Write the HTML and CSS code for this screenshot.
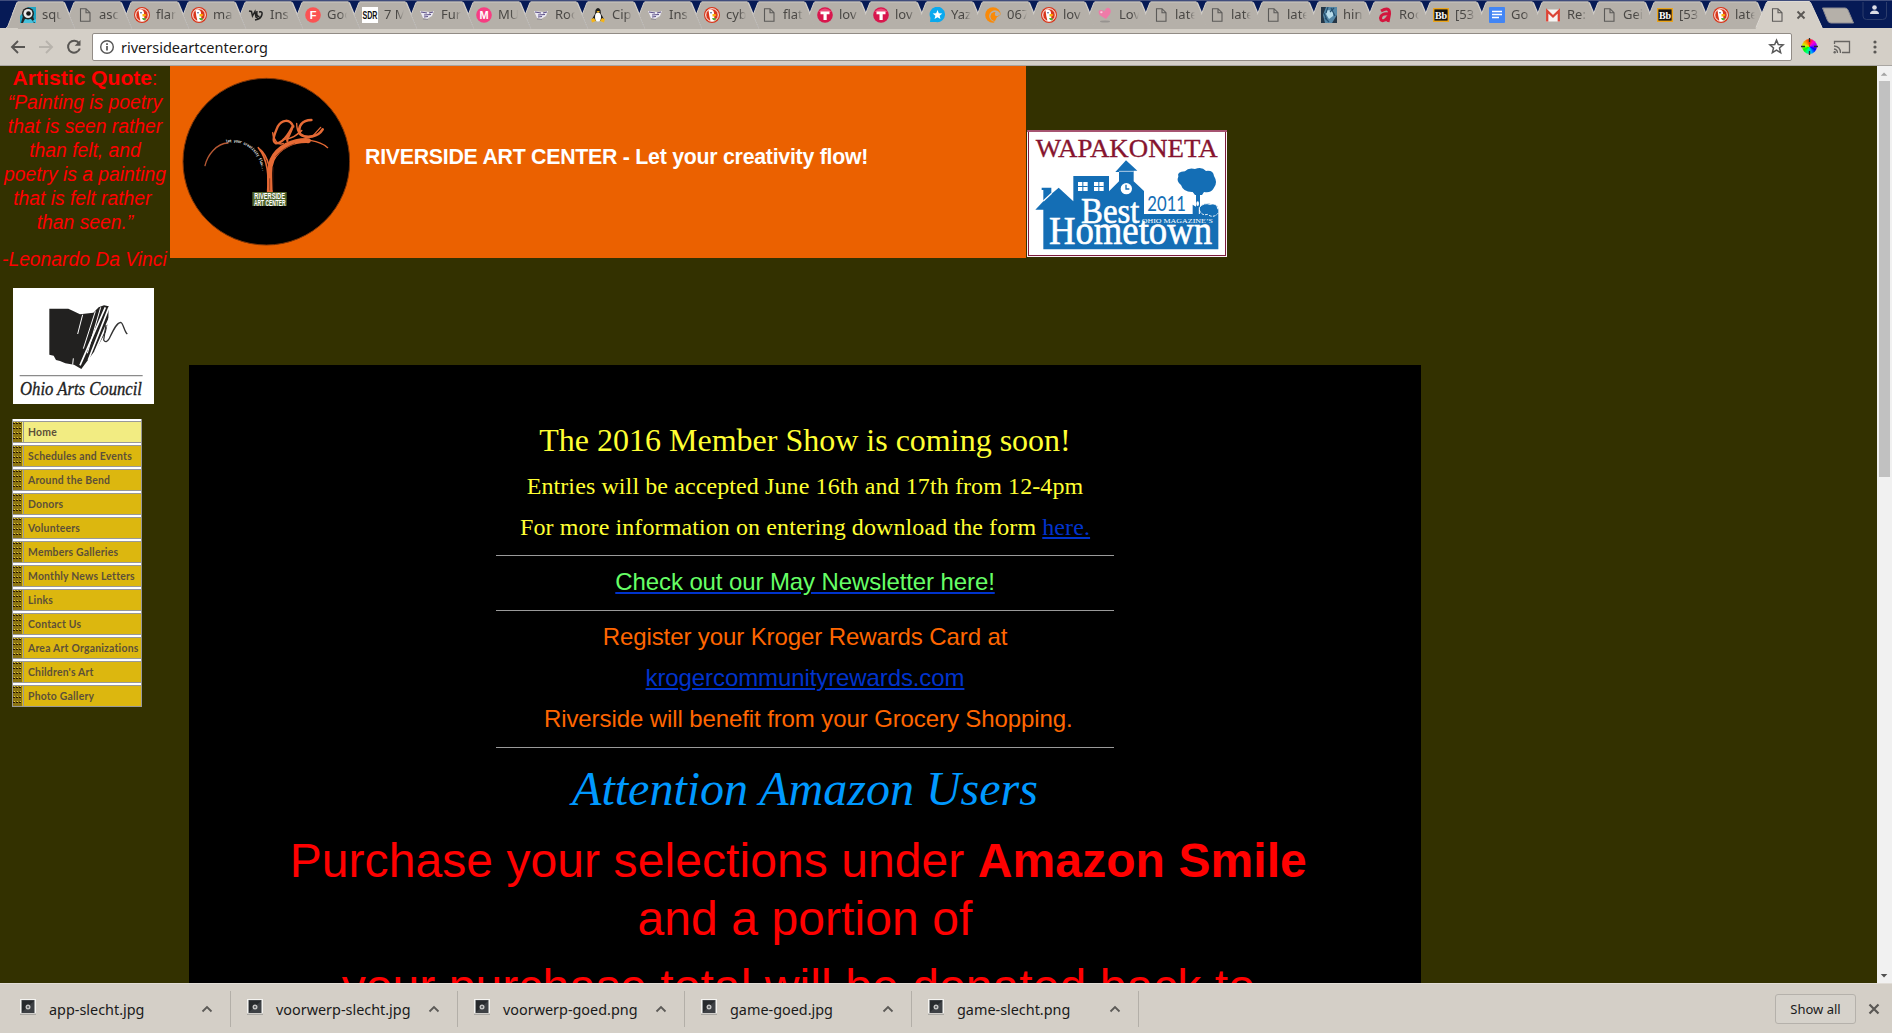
FILE: index.html
```html
<!DOCTYPE html>
<html lang="en">
<head>
<meta charset="utf-8">
<title>riversideartcenter.org</title>
<link rel="stylesheet" href="styles.css">
</head>
<body>
<svg class="defs" width="0" height="0">
  <defs>
    <symbol id="shape" viewBox="0 0 76 29"><path d="M12.3 14.5L17 2.5 18 1.5H63L64.3 2.5 75 29H18.2Z" fill="#b5b0a9"/><path d="M12.3 14.5L17 2.5" stroke="#d2cec8" fill="none"/><path d="M17.500 2H63.500" stroke="#cbc7c1" fill="none"/><path d="M64.300 2.500L75 28" stroke="#d6d2cc" stroke-width="1.200" fill="none"/></symbol>
    <symbol id="page" viewBox="0 0 16 16"><path d="M3.500 1.700H9L13 5.700V14.300H3.500ZM9 1.700V5.700H13" fill="none" stroke="#5b5a58" stroke-width="1.100"/></symbol>
    <symbol id="duck" viewBox="0 0 16 16"><circle cx="8" cy="8" r="8" fill="#d9371c"/><circle cx="8" cy="8" r="6.300" fill="#d9371c" stroke="#fff" stroke-width="1"/><path d="M4.500 3C7 1.500 10 3 10 6L10.500 14H6.500Q5 9 4.500 3Z" fill="#fff"/><path d="M8.500 7Q12 6.500 12.500 8 11 10 8.500 9.500Z" fill="#fbb50b"/><path d="M8 11L11.500 11V13.500L9 13Z" fill="#4fb03c"/><circle cx="7" cy="5.800" r=".8" fill="#2b4a80"/></symbol>
    <symbol id="squid" viewBox="0 0 16 16"><path d="M8 0H16V16H0V9Z" fill="#1fa5c4"/><path d="M1 16L3 9 13 9 15 16Z" fill="#262626"/><path d="M3 16L5 12 11 12 14 16Z" fill="#48c1dc"/><circle cx="8" cy="6.500" r="6" fill="#222"/><circle cx="8" cy="6.500" r="4.500" fill="#e8e8e8"/><circle cx="8.500" cy="6.500" r="2.300" fill="#151515"/><path d="M12 14L16 12V16Z" fill="#3fc4e4"/></symbol>
    <symbol id="mu" viewBox="0 0 16 16"><path d="M1 4L3.500 4.500 4.500 9 7 4.500 8 10 10.500 12M9 4Q8 10 11.500 9.500M11 5Q15 4 13.800 8 13 12 7 13" fill="none" stroke="#222" stroke-width="1.500"/></symbol>
    <symbol id="eff" viewBox="0 0 16 16"><circle cx="8" cy="8" r="7.800" fill="#fb5353"/><text x="8" y="12" class="glyph">F</text></symbol>
    <symbol id="sdr" viewBox="0 0 16 16"><rect width="16" height="16" fill="#fff"/><text x="8" y="12" class="glyph dark" textLength="15" lengthAdjust="spacingAndGlyphs">SDR</text></symbol>
    <symbol id="furry" viewBox="0 0 16 16"><path d="M1 4L11 5 15 4 13 9 8 12 4 11Z" fill="#eceaf3"/><path d="M2 5L8 6M10 6L14 5M5 8L12 7.500M5 10L9 9.500" stroke="#5d5088" stroke-width="1.200"/><path d="M4 12L9 12.500" stroke="#8f8b94"/></symbol>
    <symbol id="em" viewBox="0 0 16 16"><circle cx="8" cy="8" r="7.800" fill="#f73d82"/><text x="8" y="12.300" class="glyph">M</text></symbol>
    <symbol id="tux" viewBox="0 0 16 16"><path d="M5.500 3Q8-1 10.500 3L11 7 14 12 11 14H5L2 12 5 7Z" fill="#1d1d1d"/><ellipse cx="8" cy="10" rx="3" ry="4.500" fill="#fff"/><path d="M6.500 4H10L8 6ZM1 12L4 11 6 14 2 15.500ZM15 12L12 11 10 14 14 15.500Z" fill="#f4b51b"/></symbol>
    <symbol id="tee" viewBox="0 0 16 16"><circle cx="8" cy="8" r="7.800" fill="#d8164d"/><path d="M1 5Q8-2 15 5Z" fill="#ec4a78"/><path d="M3.500 4.500H12.500V7.200H9.700V13H6.500V7.200H3.500Z" fill="#fff"/></symbol>
    <symbol id="yahoo" viewBox="0 0 16 16"><path d="M1 15L1.500 11A7.700 7.700 0 1 1 7 15Z" fill="#0aa9ee"/><path d="M8.500 3L9.800 6.300 13.300 6.500 10.600 8.700 11.500 12 8.500 10.200 5.500 12 6.400 8.700 3.700 6.500 7.200 6.300Z" fill="#fff"/></symbol>
    <symbol id="crunchy" viewBox="0 0 16 16"><circle cx="8" cy="8" r="7.800" fill="#fa8a08"/><circle cx="10" cy="9" r="5.800" fill="#b5b0a9"/><circle cx="10" cy="9.500" r="4.600" fill="#fa8a08"/><circle cx="12" cy="7" r="2.200" fill="#b5b0a9"/><path d="M12 10L16 8V16H9Z" fill="#b5b0a9"/></symbol>
    <symbol id="heart" viewBox="0 0 16 16"><ellipse cx="8" cy="14.500" rx="5" ry="1" fill="#979390"/><path d="M9 12L2.500 8Q0 3 4 3 6 3 7.500 4.500 9 0 12 1 15 3 13 7Z" fill="#ef7ba8"/><path d="M3 5Q4 3.500 6 5L4 6.500Z" fill="#fbd1e0"/></symbol>
    <symbol id="anime" viewBox="0 0 16 16"><rect width="16" height="16" fill="#5587a6"/><path d="M0 0H5L2 8 4 16H0ZM11 16L16 8V16Z" fill="#243647"/><path d="M6 3L12 4 12 9 8 12 5 7Z" fill="#b8dcea"/><path d="M7 0L5 6M10 1L14 9M13 1L9 5M4 11L8 15M3 6L6 13" stroke="#25506f" stroke-width="1.200"/></symbol>
    <symbol id="angie" viewBox="0 0 16 16"><path d="M4 4Q13-1 12.500 7L11 15M12 7Q4 6 3.500 11 4 15 8 13 11 11 12 7" fill="none" stroke="#d3163e" stroke-width="3"/></symbol>
    <symbol id="bb" viewBox="0 0 16 16"><rect x=".7" y="1.700" width="14.600" height="12.600" fill="#111" stroke="#eba51c" stroke-width="1.400"/><text x="8" y="12" class="glyph serif">Bb</text></symbol>
    <symbol id="docs" viewBox="0 0 16 16"><rect width="16" height="16" rx="1" fill="#4285f4"/><path d="M3 4.500H13M3 7.500H13M3 10.500H10" stroke="#fff" stroke-width="1.300"/></symbol>
    <symbol id="gmail" viewBox="0 0 16 16"><rect x="1" y="2.500" width="14" height="12" fill="#f6f3f2"/><path d="M2.200 14.500V4L8 9.500 13.800 4V14.500" fill="none" stroke="#dc4436" stroke-width="2.300"/></symbol>
    <symbol id="thumb" viewBox="0 0 16 16"><rect width="16" height="16" fill="#f5f4f1"/><path d="M0 14.500H16V16H0Z" fill="#aaa8a3"/><rect x="1.500" y="1" width="13" height="13" fill="#3d4044"/><path d="M2 2H14L2 13Z" fill="#272a2d"/><circle cx="8" cy="8" r="2.500" fill="#c3c3c3"/><circle cx="8" cy="8" r=".9" fill="#3d4044"/></symbol>
    <pattern id="dots" width="3" height="5" patternUnits="userSpaceOnUse"><rect width="3" height="5" fill="#8c7512"/><path d="M0 1.500H2" stroke="#2a1800"/><path d="M1 .5H2" stroke="#e8cf3d"/></pattern>
  </defs>
</svg>

<header class="chrome">
  <div class="tabstrip">
    <div class="tab first"><svg class="lead" width="20" height="28"><path d="M6 28L7.500 27 17 2.500 20 2V28Z" fill="#b5b0a9"/><path d="M6 28L7.500 27 17.200 2.500" fill="none" stroke="#d2cec8"/></svg><svg class="shape"><use href="#shape"/></svg><svg class="fav"><use href="#squid"/></svg><span>squ</span></div>
    <div class="tab"><svg class="shape"><use href="#shape"/></svg><svg class="fav"><use href="#page"/></svg><span>asc</span></div>
    <div class="tab"><svg class="shape"><use href="#shape"/></svg><svg class="fav"><use href="#duck"/></svg><span>flan</span></div>
    <div class="tab"><svg class="shape"><use href="#shape"/></svg><svg class="fav"><use href="#duck"/></svg><span>ma</span></div>
    <div class="tab"><svg class="shape"><use href="#shape"/></svg><svg class="fav"><use href="#mu"/></svg><span>Ins</span></div>
    <div class="tab"><svg class="shape"><use href="#shape"/></svg><svg class="fav"><use href="#eff"/></svg><span>Goo</span></div>
    <div class="tab"><svg class="shape"><use href="#shape"/></svg><svg class="fav"><use href="#sdr"/></svg><span>7 M</span></div>
    <div class="tab"><svg class="shape"><use href="#shape"/></svg><svg class="fav"><use href="#furry"/></svg><span>Fur</span></div>
    <div class="tab"><svg class="shape"><use href="#shape"/></svg><svg class="fav"><use href="#em"/></svg><span>MU</span></div>
    <div class="tab"><svg class="shape"><use href="#shape"/></svg><svg class="fav"><use href="#furry"/></svg><span>Roo</span></div>
    <div class="tab"><svg class="shape"><use href="#shape"/></svg><svg class="fav"><use href="#tux"/></svg><span>Cip</span></div>
    <div class="tab"><svg class="shape"><use href="#shape"/></svg><svg class="fav"><use href="#furry"/></svg><span>Ins</span></div>
    <div class="tab"><svg class="shape"><use href="#shape"/></svg><svg class="fav"><use href="#duck"/></svg><span>cyb</span></div>
    <div class="tab slim"><svg class="shape"><use href="#shape"/></svg><svg class="fav"><use href="#page"/></svg><span>flat</span></div>
    <div class="tab slim"><svg class="shape"><use href="#shape"/></svg><svg class="fav"><use href="#tee"/></svg><span>lov</span></div>
    <div class="tab slim"><svg class="shape"><use href="#shape"/></svg><svg class="fav"><use href="#tee"/></svg><span>lov</span></div>
    <div class="tab slim"><svg class="shape"><use href="#shape"/></svg><svg class="fav"><use href="#yahoo"/></svg><span>Yaz</span></div>
    <div class="tab slim"><svg class="shape"><use href="#shape"/></svg><svg class="fav"><use href="#crunchy"/></svg><span>067</span></div>
    <div class="tab slim"><svg class="shape"><use href="#shape"/></svg><svg class="fav"><use href="#duck"/></svg><span>lov</span></div>
    <div class="tab slim"><svg class="shape"><use href="#shape"/></svg><svg class="fav"><use href="#heart"/></svg><span>Lov</span></div>
    <div class="tab slim"><svg class="shape"><use href="#shape"/></svg><svg class="fav"><use href="#page"/></svg><span>late</span></div>
    <div class="tab slim"><svg class="shape"><use href="#shape"/></svg><svg class="fav"><use href="#page"/></svg><span>late</span></div>
    <div class="tab slim"><svg class="shape"><use href="#shape"/></svg><svg class="fav"><use href="#page"/></svg><span>late</span></div>
    <div class="tab slim"><svg class="shape"><use href="#shape"/></svg><svg class="fav"><use href="#anime"/></svg><span>hin</span></div>
    <div class="tab slim"><svg class="shape"><use href="#shape"/></svg><svg class="fav"><use href="#angie"/></svg><span>Roo</span></div>
    <div class="tab slim"><svg class="shape"><use href="#shape"/></svg><svg class="fav"><use href="#bb"/></svg><span>[53</span></div>
    <div class="tab slim"><svg class="shape"><use href="#shape"/></svg><svg class="fav"><use href="#docs"/></svg><span>Go</span></div>
    <div class="tab slim"><svg class="shape"><use href="#shape"/></svg><svg class="fav"><use href="#gmail"/></svg><span>Re:</span></div>
    <div class="tab slim"><svg class="shape"><use href="#shape"/></svg><svg class="fav"><use href="#page"/></svg><span>Gei</span></div>
    <div class="tab slim"><svg class="shape"><use href="#shape"/></svg><svg class="fav"><use href="#bb"/></svg><span>[53</span></div>
    <div class="tab slim"><svg class="shape"><use href="#shape"/></svg><svg class="fav"><use href="#duck"/></svg><span>late</span></div>
    <div class="tab active"><svg class="shape"><path d="M6.500 29L7.500 27 17.500 2.500 18.500 1.500H60.500L61.500 2.500 73 27 74.500 29Z" fill="#d4cfc7"/><path d="M7 27.500L17.500 2.500 18.500 1.500H60.500L61.500 2.500 73 27.500" fill="none" stroke="#dedad4"/></svg><svg class="fav"><use href="#page"/></svg><svg class="close" viewBox="0 0 10 10"><path d="M1.500 1.500L8.500 8.500M8.500 1.500L1.500 8.500" stroke="#5a5754" stroke-width="1.900"/></svg></div>
    <svg class="newtab" width="34" height="18"><path d="M1.500 1H24Q26 1 27 3L32.500 16H10Q7.500 16 6.500 13.500Z" fill="#b5b0a9" stroke="#8c8b93"/></svg>
    <svg class="profile" width="26" height="20"><path d="M1 1V15Q1 18.500 4.500 18.500H20.500Q24.500 18.500 24.500 15V1" fill="none" stroke="#2c3c6b"/><circle cx="12.500" cy="6.500" r="2.300" fill="#dcdce4"/><path d="M8 13Q8 9.500 12.500 9.500T17 13Z" fill="#dcdce4"/></svg>
  </div>
  <div class="toolbar">
    <svg class="tool" viewBox="0 0 16 16"><path d="M15 8H2.500M8 2L2 8 8 14" fill="none" stroke="#585653" stroke-width="1.900"/></svg>
    <svg class="tool" viewBox="0 0 16 16"><path d="M1 8H13.500M8 2L14 8 8 14" fill="none" stroke="#b7b3ac" stroke-width="1.900"/></svg>
    <svg class="tool" viewBox="0 0 16 16"><path d="M13 4.200A6 6 0 1 0 13.800 9.500" fill="none" stroke="#585653" stroke-width="2"/><path d="M14.500 1V6.800H8.700Z" fill="#585653"/></svg>
    <div class="address">
      <svg class="info" viewBox="0 0 16 16"><circle cx="8" cy="8" r="6.300" fill="none" stroke="#555" stroke-width="1.400"/><path d="M8 7V11.500M8 4.300V6" stroke="#555" stroke-width="1.700"/></svg>
      <span>riversideartcenter.org</span>
      <svg class="star" viewBox="0 0 16 16"><path d="M8 2L9.700 6.200 14.200 6.500 10.800 9.400 11.900 13.800 8 11.400 4.100 13.800 5.200 9.400 1.800 6.500 6.300 6.200Z" fill="none" stroke="#585858" stroke-width="1.400"/></svg>
    </div>
    <div class="wheel"><svg viewBox="0 0 17 17"><path d="M8.500 0V4M8.500 13V17M0 8.500H4M13 8.500H17" stroke="#2b2b2b" stroke-width="1.300"/></svg></div>
    <svg class="cast" viewBox="0 0 18 14"><path d="M1.500 4V1.500H16.500V12.500H9" fill="none" stroke="#676562" stroke-width="1.300"/><path d="M1 6Q7.500 6.500 7.500 13M1 9Q4.500 9.500 4.500 13" fill="none" stroke="#676562" stroke-width="1.300"/><circle cx="1.700" cy="12.300" r="1.200" fill="#676562"/></svg>
    <svg class="dots" viewBox="0 0 4 14"><circle cx="2" cy="2" r="1.600"/><circle cx="2" cy="7" r="1.600"/><circle cx="2" cy="12" r="1.600"/></svg>
  </div>
</header>

<div class="viewport">
  <div class="site">
    <aside class="sidebar">
      <p class="quote"><b>Artistic Quote</b>:<br><i>“Painting is poetry<br>that is seen rather<br>than felt, and<br>poetry is a painting<br>that is felt rather&nbsp;<br>than seen.”</i></p>
      <p class="author">-Leonardo Da Vinci</p>
      <svg class="council" viewBox="39 54 423 348">
        <rect x="39" y="54" width="423" height="348" fill="#fff"/>
        <path d="M148 116H205L218 122 240 133 280 128 296 112 312 106 326 109 325 150 318 185 290 235 244 297 222 284 196 280 180 273 168 270 161 257 148 254Z" fill="#222120"/>
        <path d="M248 134L233 192M286 124L250 236M302 112L262 250" stroke="#fff" stroke-width="3" fill="none"/>
        <path d="M316 112L240 286M327 112L265 270M328 145L285 245" stroke="#fff" stroke-width="5" fill="none"/>
        <path d="M220 265L218 284" stroke="#fff" stroke-width="3"/>
        <path d="M318 165L311 210Q318 222 328 205C340 180 350 158 362 157C370 158 372 184 382 192" fill="none" stroke="#333" stroke-width="4"/>
        <path d="M59 317H428" stroke="#8b8b8b" stroke-width="4"/>
        <text x="60" y="374" textLength="366" lengthAdjust="spacingAndGlyphs">Ohio Arts Council</text>
      </svg>
      <nav class="menu">
        <a class="current"><svg><rect width="9" height="20" fill="url(#dots)"/></svg>Home</a>
        <a><svg><rect width="9" height="20" fill="url(#dots)"/></svg>Schedules and Events</a>
        <a><svg><rect width="9" height="20" fill="url(#dots)"/></svg>Around the Bend</a>
        <a><svg><rect width="9" height="20" fill="url(#dots)"/></svg>Donors</a>
        <a><svg><rect width="9" height="20" fill="url(#dots)"/></svg>Volunteers</a>
        <a><svg><rect width="9" height="20" fill="url(#dots)"/></svg>Members Galleries</a>
        <a><svg><rect width="9" height="20" fill="url(#dots)"/></svg>Monthly News Letters</a>
        <a><svg><rect width="9" height="20" fill="url(#dots)"/></svg>Links</a>
        <a><svg><rect width="9" height="20" fill="url(#dots)"/></svg>Contact Us</a>
        <a><svg><rect width="9" height="20" fill="url(#dots)"/></svg>Area Art Organizations</a>
        <a><svg><rect width="9" height="20" fill="url(#dots)"/></svg>Children's Art</a>
        <a><svg><rect width="9" height="20" fill="url(#dots)"/></svg>Photo Gallery</a>
      </nav>
    </aside>
    <main>
      <div class="masthead">
        <div class="banner">
          <svg class="logo" viewBox="510 18 540 576">
            <circle cx="799" cy="305" r="250" fill="#000" stroke="#7d3508" stroke-width="3"/>
            <g fill="none" stroke="#e66a35" stroke-linecap="round">
              <path d="M615 317C622 285 650 250 684 249" stroke="#b75934" stroke-width="4"/>
              <path d="M811 395C808 350 806 325 816 300C835 260 880 240 925 242" stroke-width="15"/>
              <path d="M880 246C915 236 955 240 983 263" stroke-width="4"/>
              <path d="M803 395C806 350 805 300 775 263M808 320C800 290 790 275 780 268" stroke-width="5"/>
              <path d="M880 200C870 175 845 178 833 200C822 225 815 245 828 250C850 250 870 215 880 195C872 220 858 240 862 243" stroke-width="7"/>
              <path d="M818 218C820 240 835 258 850 250" stroke-width="4"/>
              <path d="M850 238C875 238 890 225 905 212" stroke-width="5"/>
              <path d="M934 180C905 180 893 200 900 222C920 238 955 230 968 208" stroke-width="8"/>
              <path d="M890 190C890 215 900 232 925 232M940 226L962 202" stroke-width="4"/>
            </g>
            <path d="M809 392V355M818 390L819 320M826 290Q850 262 885 251" stroke="#6d2b14" stroke-width="2" fill="none"/>
            <path id="arc" d="M678 248C735 238 785 275 789 350" fill="none"/>
            <text class="motto"><textPath href="#arc" textLength="158" lengthAdjust="spacingAndGlyphs">let your creativity flow...</textPath></text>
            <rect x="757" y="396" width="103" height="42" fill="#50652c"/>
            <text class="plate" x="763" y="416" textLength="92" lengthAdjust="spacingAndGlyphs">RIVERSIDE</text>
            <text class="plate" x="762" y="437" textLength="95" lengthAdjust="spacingAndGlyphs">ART CENTER</text>
          </svg>
          <h1>RIVERSIDE ART CENTER - Let your creativity flow!</h1>
        </div>
        <svg class="badge" viewBox="81 60 600 381">
          <rect x="81" y="60" width="600" height="381" fill="#fbf0f5"/>
          <rect x="85.500" y="64.500" width="591" height="372" fill="#fff" stroke="#7d1c3c" stroke-width="3"/>
          <path d="M81 63H681" stroke="#a65471" stroke-width="6"/>
          <text class="wap" x="107" y="140" textLength="546" lengthAdjust="spacingAndGlyphs">WAPAKONETA</text>
          <g fill="#146eb5">
            <path d="M130 418V299H106L130 274V240H125V233H154V252L176 233 220 274V198H327V244L357 214V186H346L378 151 412 182H401V214L432 243V312H578V284L588 290V255H600V290L606 284Q620 276 632 282 655 280 655 298V418Z"/>
            <path d="M543 225Q528 213 535 200 530 185 555 184 565 172 585 177 605 168 618 183 640 180 642 198 655 218 641 235 633 250 612 246L606 255H585L578 246Q550 247 543 225Z"/>
          </g>
          <path d="M130 273L155 250" stroke="#fff" stroke-width="4"/>
          <path d="M357 184H401" stroke="#fff" stroke-width="2"/>
          <path d="M598 312V292Q612 276 630 283 650 276 654 298" fill="none" stroke="#fff" stroke-width="3"/>
          <path d="M598 300Q605 318 622 313 640 326 654 310" fill="none" stroke="#fff" stroke-width="3" stroke-dasharray="8 4"/>
          <ellipse cx="593" cy="281" rx="4" ry="7" fill="#fff"/>
          <path d="M234 216H263V243H234ZM282 216H311V243H282Z" fill="#fff"/>
          <path d="M248.500 216V243M234 229.500H263M296.500 216V243M282 229.500H311" stroke="#146eb5" stroke-width="3"/>
          <circle cx="379" cy="236" r="17" fill="#fff"/><path d="M378 224V237H388" fill="none" stroke="#146eb5" stroke-width="4"/>
          <text class="year" x="442" y="304" textLength="116" lengthAdjust="spacingAndGlyphs">2011</text>
          <text class="word bold" x="243" y="338" font-size="110" textLength="175" lengthAdjust="spacingAndGlyphs">Best</text>
          <text class="word" x="425" y="338" font-size="20" textLength="214" lengthAdjust="spacingAndGlyphs">OHIO MAGAZINE’S</text>
          <text class="word bold" x="147" y="403" font-size="120" textLength="489" lengthAdjust="spacingAndGlyphs">Hometown</text>
        </svg>
      </div>
      <section class="panel">
        <h2>The 2016 Member Show is coming soon!</h2>
        <p class="show">Entries will be accepted June 16th and 17th from 12-4pm</p>
        <p class="show">For more information on entering download the form <a>here.</a></p>
        <hr>
        <p class="news"><a>Check out our May Newsletter here!</a></p>
        <hr>
        <p class="kroger">Register your Kroger Rewards Card at</p>
        <p class="kroger"><a>krogercommunityrewards.com</a></p>
        <p class="kroger">&nbsp;Riverside will benefit from your Grocery Shopping.</p>
        <hr>
        <h3>Attention Amazon Users</h3>
        <p class="smile">Purchase your selections under <b>Amazon Smile</b>&nbsp;<br>and a portion of</p>
        <p class="smile last">your purchase total will be donated back to&nbsp;</p>
      </section>
    </main>
  </div>
  <div class="scrollbar">
    <svg viewBox="0 0 16 15"><path d="M4 10L7.500 6.500 11 10Z" fill="#a3a3a3"/></svg>
    <div class="handle"></div>
    <svg viewBox="0 0 16 15"><path d="M4 6L7.500 9.500 11 6Z" fill="#505050"/></svg>
  </div>
</div>

<footer class="downloads">
  <div class="file"><svg class="thumb"><use href="#thumb"/></svg><span>app-slecht.jpg</span><svg class="chev" viewBox="0 0 12 8"><path d="M1.500 6.500L6 2 10.500 6.500" fill="none" stroke="#5c5a57" stroke-width="1.800"/></svg></div>
  <div class="file"><svg class="thumb"><use href="#thumb"/></svg><span>voorwerp-slecht.jpg</span><svg class="chev" viewBox="0 0 12 8"><path d="M1.500 6.500L6 2 10.500 6.500" fill="none" stroke="#5c5a57" stroke-width="1.800"/></svg></div>
  <div class="file"><svg class="thumb"><use href="#thumb"/></svg><span>voorwerp-goed.png</span><svg class="chev" viewBox="0 0 12 8"><path d="M1.500 6.500L6 2 10.500 6.500" fill="none" stroke="#5c5a57" stroke-width="1.800"/></svg></div>
  <div class="file"><svg class="thumb"><use href="#thumb"/></svg><span>game-goed.jpg</span><svg class="chev" viewBox="0 0 12 8"><path d="M1.500 6.500L6 2 10.500 6.500" fill="none" stroke="#5c5a57" stroke-width="1.800"/></svg></div>
  <div class="file"><svg class="thumb"><use href="#thumb"/></svg><span>game-slecht.png</span><svg class="chev" viewBox="0 0 12 8"><path d="M1.500 6.500L6 2 10.500 6.500" fill="none" stroke="#5c5a57" stroke-width="1.800"/></svg></div>
  <button class="showall">Show all</button>
  <svg class="dismiss" viewBox="0 0 12 12"><path d="M1.500 1.500L10.500 10.500M10.500 1.500L1.500 10.500" stroke="#5a5855" stroke-width="2.200"/></svg>
</footer>
</body>
</html>
```
FILE: styles.css
```css
* { box-sizing: border-box; }
body { margin: 0; width: 1892px; height: 1033px; overflow: hidden; display: flex; flex-direction: column; font-family: "Noto Sans", sans-serif; color: #1a1a1a; background: #d4cfc7; }
svg { display: block; flex: none; }
p, h1, h2, h3 { margin: 0; font-weight: normal; }
.defs { position: absolute; }
.glyph { font: bold 11px "Liberation Sans", sans-serif; fill: #fff; text-anchor: middle; }
.glyph.dark { font-size: 11px; fill: #111; }
.glyph.serif { font: bold 10px "Liberation Serif", serif; }

/* tabs */
.tabstrip { height: 28px; background: linear-gradient(#404d7c 0 1px, #061a56 1px); display: flex; }
.tab { position: relative; width: 57px; height: 28px; flex: none; display: flex; padding: 7px 0 0 20px; }
.tab.slim { width: 56px; }
.shape { position: absolute; left: 0; top: 0; width: 76px; height: 29px; }
.lead { position: absolute; left: 0; top: 0; }
.tab .fav { position: relative; width: 16px; height: 16px; }
.tab span { position: relative; flex: none; width: 21px; margin-left: 6px; white-space: nowrap; font-size: 13px; line-height: 15px; color: #4a4845; z-index: 1; -webkit-mask-image: linear-gradient(90deg, #000 13px, transparent 20px); mask-image: linear-gradient(90deg, #000 13px, transparent 20px); }
.tab.active { width: 76px; }
.tab .close { position: relative; width: 10px; height: 10px; margin: 3px 0 0 11px; }
.newtab { margin: 7px 0 0 -4px; }
.profile { margin: 1px 0 0 7px; }

/* toolbar */
.toolbar { height: 38px; display: flex; align-items: center; padding-left: 10px; border-bottom: 1px solid #a9a6a2; }
.tool { width: 16px; height: 16px; margin-right: 12px; }
.tool + .tool + .tool { margin-right: 10px; }
.address { width: 1700px; height: 28px; border: 1px solid #928c86; border-radius: 2px; background: #fff; display: flex; align-items: center; padding: 0 6px; }
.info { width: 16px; height: 16px; }
.address span { flex: 1; margin-left: 6px; font-size: 14.500px; line-height: 26px; }
.star { width: 17px; height: 17px; }
.wheel { width: 15px; height: 15px; margin-left: 10px; border-radius: 50%; background: conic-gradient(#ff2a00, #f0c, #90f, #00f, #0af, #0f8, #0f0, #cf0, #f90, #ff2a00); }
.wheel svg { width: 17px; height: 17px; margin: -1px; }
.cast { width: 18px; height: 14px; margin-left: 16px; }
.dots { width: 4px; height: 14px; margin-left: 22px; fill: #5a5855; }

/* page area */
.viewport { height: 917px; display: flex; overflow: hidden; }
.site { width: 1877px; flex: none; background: #333100; display: flex; font-family: "Liberation Sans", Arial, sans-serif; overflow: hidden; }
.scrollbar { width: 15px; background: #f1f1f1; display: flex; flex-direction: column; }
.scrollbar svg { width: 15px; height: 15px; }
.handle { width: 11px; height: 396px; margin: 0 2px auto; background: #c1c1c1; }

.sidebar { width: 170px; flex: none; color: #f00; padding-top: 1px; }
.quote { font-size: 19.300px; line-height: 24px; text-align: center; white-space: nowrap; }
.quote b { font-size: 21.100px; line-height: 20px; }
.author { font-size: 19.300px; line-height: 24px; margin: 13px 0 0 2px; font-style: italic; white-space: nowrap; }
.council { width: 141px; height: 116px; margin: 16px 0 0 13px; }
.council text { font: italic 54px "Liberation Serif", serif; fill: #222; stroke: #222; }

.menu { width: 130px; margin: 15px 0 0 12px; background: #fff; }
.menu a { display: flex; height: 24px; border: 1px solid #999; border-top: 0; background: linear-gradient(#fff 0 2px, #999 2px 3px, #dcb70f 3px); font: bold 10.400px/21px Lato, sans-serif; letter-spacing: .22px; color: #5d5038; padding-top: 3px; white-space: nowrap; }
.menu a.current { background: linear-gradient(#fff 0 2px, #999 2px 3px, #f2ec82 3px); }
.menu svg { width: 11px; height: 20px; margin-right: 4px; border-right: 1px solid #999; }

main { flex: 1; }
.masthead { display: flex; align-items: flex-end; height: 192px; }
.banner { width: 856px; height: 192px; background: #eb6100; display: flex; }
.logo { width: 180px; height: 192px; }
.motto { font: bold 12px "Liberation Mono", monospace; fill: #fff; }
.plate { font: bold 25px "Liberation Sans", sans-serif; fill: #fff; }
.banner h1 { margin: 77px 0 0 15px; font-size: 21.300px; line-height: 28px; letter-spacing: -.25px; font-weight: bold; color: #fff; white-space: nowrap; }
.badge { width: 200px; height: 127px; margin: 0 0 1px 1px; }
.wap { font: 78px "Liberation Serif", serif; fill: #86142f; stroke: #86142f; }
.year { font: 64px Lato, sans-serif; fill: #146eb5; }
.word { font-family: "Liberation Serif", serif; fill: #fff; }
.word.bold { stroke: #fff; stroke-width: 2px; }

.panel { width: 1232px; height: 700px; margin: 107px 0 0 19px; padding-top: 57px; background: #000; text-align: center; white-space: nowrap; }
.panel a { color: #0033cc; text-decoration: underline; }
.panel h2 { font: 32px/37px "Liberation Serif", serif; color: #ff3; }
.panel p { font-size: 24px; line-height: 28px; margin-top: 13px; letter-spacing: -.1px; }
.panel p.show { font-family: "Liberation Serif", serif; color: #ff3; letter-spacing: .1px; }
.panel hr { width: 618px; height: 1px; margin: 14px auto 12px; border: 0; background: #9a9a9a; }
.panel hr + p { margin-top: 0; }
.panel .news a { color: #6f6; text-decoration-color: #0033cc; }
.panel .kroger { color: #f60; }
.panel h3 { margin-top: 13px; font: italic 48px/55px "Liberation Serif", serif; color: #09f; }
.panel p.smile { font-size: 48px; line-height: 58px; margin-top: 16px; letter-spacing: .08px; color: #f00; }
.panel p.last { margin-top: 10px; }

/* downloads */
.downloads { height: 50px; border-top: 1px solid #e1ddd7; background: #d4cfc7; display: flex; align-items: center; }
.file { width: 227px; height: 36px; border-right: 1px solid #b3afa8; display: flex; align-items: center; padding-left: 16px; font-size: 14.400px; }
.thumb { width: 16px; height: 16px; margin-bottom: 3px; }
.file span { flex: 1; margin: 2px 0 0 13px; line-height: 20px; }
.chev { width: 12px; height: 8px; margin-right: 17px; }
.file:first-child { width: 231px; padding-left: 20px; }
.file:first-child .chev { margin-right: 17px; }
.showall { width: 81px; height: 30px; margin: 0 12px 0 auto; border: 1px solid #b5b1ab; border-radius: 3px; background: #d6d2cb; font: 13px "Noto Sans", sans-serif; color: #1a1a1a; padding: 0; }
.dismiss { width: 12px; height: 12px; margin-right: 12px; }
```
